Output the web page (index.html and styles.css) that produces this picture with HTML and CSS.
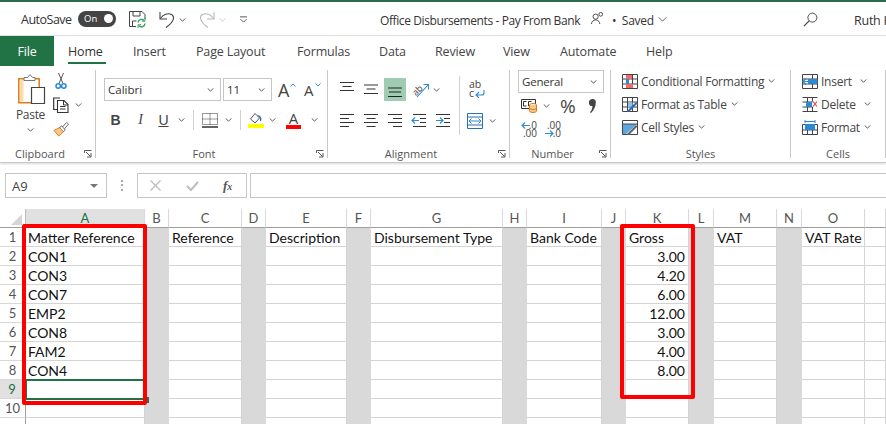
FILE: index.html
```html
<!DOCTYPE html>
<html lang="en">
<head>
<meta charset="utf-8">
<title>Office Disbursements - Pay From Bank</title>
<link rel="stylesheet" href="styles.css">
</head>
<body>
<div class="app">
  <header class="titlebar">
    <span class="autosave">AutoSave</span>
    <span class="toggle"><span class="toggle-text">On</span><span class="knob"></span></span>
    <svg class="qat qat-save" viewBox="0 0 17 17"><path d="M7 15.500H.5V.5h12.500l3 3v4.500" fill="none" stroke="#444"/><path d="M4 .5v4.500h7V.5M3.500 15v-5h4" fill="none" stroke="#444"/><path d="M9 11.500a3.500 3.500 0 0 1 6-2M16 12.500a3.500 3.500 0 0 1-6 2.200" fill="none" stroke="#2f9e5c" stroke-width="1.400"/><path d="M16 7v3.200h-3M9 17v-3.200h3" fill="none" stroke="#2f9e5c"/></svg>
    <svg class="qat qat-undo" viewBox="0 0 17 17"><path d="M1 1v7h7" fill="none" stroke="#444" stroke-width="1.100"/><path d="M1.500 7.500C4 3.500 9 1.500 12.500 3.500c3.500 2.200 2.800 7-5.500 13" fill="none" stroke="#444" stroke-width="1.100"/></svg>
    <svg class="chev qat-c1" viewBox="0 0 8 5"><path d="M.5 .5L4 4 7.500 .5" fill="none" stroke="#444" stroke-width="1.100"/></svg>
    <svg class="qat qat-redo" viewBox="0 0 17 17"><path d="M16 1v7H9" fill="none" stroke="#b8b8b8" stroke-width="1.100"/><path d="M15.500 7.500C13 3.500 8 1.500 4.500 3.500c-3.500 2.200-2.800 7 5.500 13" fill="none" stroke="#b8b8b8" stroke-width="1.100"/></svg>
    <svg class="chev qat-c2" viewBox="0 0 8 5"><path d="M.5 .5L4 4 7.500 .5" fill="none" stroke="#c4c4c4" stroke-width="1.100"/></svg>
    <svg class="qat-more" viewBox="0 0 8 7"><path d="M0 .5h8M.5 3L4 6.500 7.500 3" fill="none" stroke="#444"/></svg>
    <span class="doc-title">Office Disbursements - Pay From Bank</span>
    <svg class="person" viewBox="0 0 14 14"><circle cx="5" cy="5" r="2.800" fill="none" stroke="#444"/><path d="M.5 13a4.500 4.500 0 0 1 9 0" fill="none" stroke="#444"/><circle cx="10.500" cy="2.500" r="2" fill="none" stroke="#444"/></svg>
    <span class="saved">•&nbsp; Saved</span>
    <svg class="chev saved-c" viewBox="0 0 10 6"><path d="M.5 .5L5 5 9.500 .5" fill="none" stroke="#444"/></svg>
    <svg class="search" viewBox="0 0 16 16"><circle cx="10" cy="6" r="4.800" fill="none" stroke="#444"/><path d="M6.500 9.500L1 15" stroke="#444" stroke-width="1.300"/></svg>
    <span class="user">Ruth H</span>
  </header>

  <nav class="tabs">
    <span class="tab tab-file">File</span>
    <span class="tab tab-active">Home</span>
    <span class="tab t-insert">Insert</span>
    <span class="tab t-page">Page Layout</span>
    <span class="tab t-formulas">Formulas</span>
    <span class="tab t-data">Data</span>
    <span class="tab t-review">Review</span>
    <span class="tab t-view">View</span>
    <span class="tab t-auto">Automate</span>
    <span class="tab t-help">Help</span>
  </nav>

  <section class="ribbon">
    <div class="group g-clip">
      <div class="g-body clip-body">
        <div class="paste">
          <svg class="paste-ic" viewBox="0 0 28 30"><path d="M.8 4.800h20.400v24H.8z" fill="#fff" stroke="#e07b16" stroke-width="1.500"/><path d="M2 6h3.500v21.500H2z" fill="#fbdca8"/><path d="M6 6.500V3.500h3.500L12 .7l2.500 2.800H17v3z" fill="#fff" stroke="#777"/><path d="M13.500 13.500h13v16h-13z" fill="#fff" stroke="#444" stroke-width="1.200"/></svg>
          <span class="paste-label">Paste</span>
          <svg class="chev" viewBox="0 0 8 5"><path d="M.5 .5L4 4 7.500 .5" fill="none" stroke="#444" stroke-width="1.100"/></svg>
        </div>
        <div class="clip-tools">
          <svg class="ic16" viewBox="0 0 16 16"><path d="M5.500 0l4.500 10.500M10.500 0L6 10.500" stroke="#555" fill="none"/><circle cx="5.200" cy="13" r="2.200" fill="none" stroke="#2a8ad4" stroke-width="1.500"/><circle cx="10.800" cy="13" r="2.200" fill="none" stroke="#2a8ad4" stroke-width="1.500"/></svg>
          <span class="row"><svg class="ic16" viewBox="0 0 16 16"><path d="M7 1H.7v11.500H4" fill="none" stroke="#333" stroke-width="1.200"/><path d="M4.500 3.500h6.500l4 4v8h-10.500z" fill="#fff" stroke="#333" stroke-width="1.100"/><path d="M7 9.500h5.500M7 12h5.500M10.500 3.500v4.500h4.500" fill="none" stroke="#333"/></svg><svg class="chev" viewBox="0 0 8 5"><path d="M.5 .5L4 4 7.500 .5" fill="none" stroke="#444" stroke-width="1.100"/></svg></span>
          <svg class="ic16" viewBox="0 0 17 16"><path d="M10 6l4.500-5 2 1.800L12 8" fill="none" stroke="#666"/><path d="M9 4.500l4 4.500-2 2-4-4z" fill="#fff" stroke="#666"/><path d="M7 6.500L1 9.500 6 15.500l5-4.500z" fill="#f7c78b" stroke="#e07b16"/></svg>
        </div>
      </div>
      <div class="g-label has-launcher">Clipboard<svg class="launcher" viewBox="0 0 8 8"><path d="M.5 3V.5H7.500M2 2l4.500 4.500M3 7h4V3" fill="none" stroke="#555"/></svg></div>
    </div>

    <div class="group g-font">
      <div class="g-body font-body">
        <div class="row font-row1">
          <span class="combo combo-font">Calibri<svg class="chev" viewBox="0 0 8 5"><path d="M.5 .5L4 4 7.500 .5" fill="none" stroke="#444" stroke-width="1.100"/></svg></span>
          <span class="combo combo-size">11<svg class="chev" viewBox="0 0 8 5"><path d="M.5 .5L4 4 7.500 .5" fill="none" stroke="#444" stroke-width="1.100"/></svg></span>
          <span class="grow">A<svg class="caret" viewBox="0 0 6 4"><path d="M.5 3.500L3 1l2.500 2.500" fill="none" stroke="#2a8ad4"/></svg></span>
          <span class="grow shrink">A<svg class="caret" viewBox="0 0 6 4"><path d="M.5 .5L3 3l2.500-2.500" fill="none" stroke="#2a8ad4"/></svg></span>
        </div>
        <div class="row font-row2">
          <span class="fmt fmt-b">B</span>
          <span class="fmt fmt-i">I</span>
          <span class="fmt fmt-u">U</span>
          <svg class="chev" viewBox="0 0 8 5"><path d="M.5 .5L4 4 7.500 .5" fill="none" stroke="#444" stroke-width="1.100"/></svg>
          <span class="vsep"></span>
          <svg class="ic16 ic-border" viewBox="0 0 16 15"><path d="M.5 .5h15v11H.5zM8 .5v11M.5 6h15" fill="none" stroke="#333" stroke-dasharray="1 1"/><path d="M0 14h16" stroke="#111" stroke-width="1.300"/></svg>
          <svg class="chev" viewBox="0 0 8 5"><path d="M.5 .5L4 4 7.500 .5" fill="none" stroke="#444" stroke-width="1.100"/></svg>
          <span class="vsep"></span>
          <svg class="ic16 ic-fill" viewBox="0 0 16 16"><path d="M2.500 7L7 1.500l4.500 4.500-4.500 5z" fill="#fff" stroke="#555"/><path d="M12.500 9c.8-2.500-.2-4.500-2.500-5.500" fill="none" stroke="#2a6fb5" stroke-width="1.300"/><path d="M0 12h16v4H0z" fill="#ffff00"/></svg>
          <svg class="chev" viewBox="0 0 8 5"><path d="M.5 .5L4 4 7.500 .5" fill="none" stroke="#444" stroke-width="1.100"/></svg>
          <span class="font-color">A</span>
          <svg class="chev" viewBox="0 0 8 5"><path d="M.5 .5L4 4 7.500 .5" fill="none" stroke="#444" stroke-width="1.100"/></svg>
        </div>
      </div>
      <div class="g-label has-launcher">Font<svg class="launcher" viewBox="0 0 8 8"><path d="M.5 3V.5H7.500M2 2l4.500 4.500M3 7h4V3" fill="none" stroke="#555"/></svg></div>
    </div>

    <div class="group g-align">
      <div class="g-body align-body">
        <div class="align-main">
          <div class="row align-row">
            <svg class="al" viewBox="0 0 16 16"><path d="M1 .5h14M3.500 4.500h9M1 8.500h14" stroke="#333"/></svg>
            <svg class="al" viewBox="0 0 16 16"><path d="M1 3h14M3.500 7h9M1 11.500h14" stroke="#333"/></svg>
            <span class="al-on"><svg class="al" viewBox="0 0 16 16"><path d="M1 6h14M2 10h12M1 14.500h14" stroke="#222"/></svg></span>
            <svg class="al-orient" viewBox="0 0 18 16"><text x="0" y="11" class="orient-text" transform="rotate(-45 6 8)">ab</text><path d="M5 15L16 3M11.500 2.500h5v5" fill="none" stroke="#2a8ad4" stroke-width="1.100"/></svg>
            <svg class="chev" viewBox="0 0 8 5"><path d="M.5 .5L4 4 7.500 .5" fill="none" stroke="#444" stroke-width="1.100"/></svg>
          </div>
          <div class="row align-row2">
            <svg class="al" viewBox="0 0 16 16"><path d="M1 1.500h14M1 5.500h9M1 9.500h14M1 13.500h9" stroke="#333"/></svg>
            <svg class="al" viewBox="0 0 16 16"><path d="M1 1.500h14M3.500 5.500h9M1 9.500h14M3.500 13.500h9" stroke="#333"/></svg>
            <svg class="al" viewBox="0 0 16 16"><path d="M1 1.500h14M6 5.500h9M1 9.500h14M6 13.500h9" stroke="#333"/></svg>
            <svg class="al" viewBox="0 0 16 16"><path d="M2 1.500h13M9 5.500h6M9 9.500h6M2 13.500h13" stroke="#333"/><path d="M8 7.500H1M4 4.500l-3 3 3 3" fill="none" stroke="#2a8ad4" stroke-width="1.100"/></svg>
            <svg class="al" viewBox="0 0 16 16"><path d="M1 1.500h14M9 5.500h6M9 9.500h6M1 13.500h14" stroke="#333"/><path d="M1 7.500h7M5 4.500l3 3-3 3" fill="none" stroke="#2a8ad4" stroke-width="1.100"/></svg>
          </div>
        </div>
        <span class="vsep tall"></span>
        <div class="align-side">
          <span class="wrap"><span class="wrap-ab">ab</span><span class="wrap-c">c<svg class="wrap-arrow" viewBox="0 0 10 8"><path d="M9 0v3a2 2 0 0 1-2 2H1M4 2L1 5l3 3" fill="none" stroke="#2a8ad4" stroke-width="1.100"/></svg></span></span>
          <span class="row merge"><svg class="ic16" viewBox="0 0 16 16"><path d="M.5 .5h15v15H.5zM.5 4h15M.5 12h15" fill="none" stroke="#2a6fb5"/><path d="M2 8h12M4.500 5.500L2 8l2.500 2.500M11.500 5.500L14 8l-2.500 2.500" fill="none" stroke="#2a8ad4"/></svg><svg class="chev" viewBox="0 0 8 5"><path d="M.5 .5L4 4 7.500 .5" fill="none" stroke="#444" stroke-width="1.100"/></svg></span>
        </div>
      </div>
      <div class="g-label has-launcher">Alignment<svg class="launcher" viewBox="0 0 8 8"><path d="M.5 3V.5H7.500M2 2l4.500 4.500M3 7h4V3" fill="none" stroke="#555"/></svg></div>
    </div>

    <div class="group g-num">
      <div class="g-body num-body">
        <span class="combo combo-num">General<svg class="chev" viewBox="0 0 8 5"><path d="M.5 .5L4 4 7.500 .5" fill="none" stroke="#444" stroke-width="1.100"/></svg></span>
        <div class="row num-row">
          <svg class="ic16 cur" viewBox="0 0 16 14"><path d="M.5 .5h14v9H.5z" fill="none" stroke="#333"/><path d="M2.500 2.500h3M2.500 7h3M2.500 2.500V7M7.500 2.500h3M7.500 7h1M7.500 2.500V7" fill="none" stroke="#333"/><ellipse cx="12" cy="6" rx="3.500" ry="1.500" fill="#fff" stroke="#e07b16"/><path d="M8.500 6v6c0 2 7 2 7 0V6" fill="#f7c78b" stroke="#e07b16"/><path d="M8.500 9c0 2 7 2 7 0" fill="none" stroke="#e07b16"/></svg>
          <svg class="chev" viewBox="0 0 8 5"><path d="M.5 .5L4 4 7.500 .5" fill="none" stroke="#444" stroke-width="1.100"/></svg>
          <span class="pct">%</span>
          <svg class="comma" viewBox="0 0 7 14"><path d="M3.500 0a3.200 3.200 0 0 1 3.300 3.800C6.800 8 4.500 11.500 2 14l-1-.7c1.400-1.700 2.300-3.500 2.500-6.100a3.600 3.600 0 0 1 0-7.200z" fill="#444"/></svg>
        </div>
        <div class="row dec-row">
          <span class="dec"><svg class="dec-a" viewBox="0 0 9 7"><path d="M9 3.500H1M4 .5l-3 3 3 3" fill="none" stroke="#2a8ad4" stroke-width="1.100"/></svg><span class="d1">.0</span><span class="d2">.00</span></span>
          <span class="dec"><span class="d1">.00</span><svg class="dec-a dec-b" viewBox="0 0 9 7"><path d="M0 3.500h8M5 .5l3 3-3 3" fill="none" stroke="#2a8ad4" stroke-width="1.100"/></svg><span class="d2">.0</span></span>
        </div>
      </div>
      <div class="g-label has-launcher">Number<svg class="launcher" viewBox="0 0 8 8"><path d="M.5 3V.5H7.500M2 2l4.500 4.500M3 7h4V3" fill="none" stroke="#555"/></svg></div>
    </div>

    <div class="group g-styles">
      <div class="g-body list-body">
        <div class="li"><svg class="ic16" viewBox="0 0 16 15"><path d="M.5 .5h15v14H.5zM.5 5h15M.5 10h15M5.500 .5v14M10.500 .5v14" fill="none" stroke="#444"/><path d="M4 1h6v4H4zM4 10h7v4H4z" fill="#f46a6a"/><path d="M4 5h3v5H4z" fill="#2a8ad4"/></svg><span>Conditional Formatting</span><svg class="chev" viewBox="0 0 8 5"><path d="M.5 .5L4 4 7.500 .5" fill="none" stroke="#444" stroke-width="1.100"/></svg></div>
        <div class="li"><svg class="ic16" viewBox="0 0 16 15"><path d="M.5 .5h15v14H.5zM.5 5h15M.5 10h15M5.500 .5v14M10.500 .5v14" fill="none" stroke="#444"/><path d="M6 5.500h4.500v4H6z" fill="#8cc3ee"/><path d="M5 14l9-9 1.500 1.500-9 9z" fill="#2a6fb5"/></svg><span>Format as Table</span><svg class="chev" viewBox="0 0 8 5"><path d="M.5 .5L4 4 7.500 .5" fill="none" stroke="#444" stroke-width="1.100"/></svg></div>
        <div class="li"><svg class="ic16" viewBox="0 0 16 15"><path d="M.5 .5h15v14H.5z" fill="none" stroke="#444"/><path d="M1 4h14L4 14H1z" fill="#5ba7e0"/><path d="M.5 4h15" stroke="#444"/><path d="M5 14l9-9 1.500 1.500-9 9z" fill="#666"/></svg><span>Cell Styles</span><svg class="chev" viewBox="0 0 8 5"><path d="M.5 .5L4 4 7.500 .5" fill="none" stroke="#444" stroke-width="1.100"/></svg></div>
      </div>
      <div class="g-label">Styles</div>
    </div>

    <div class="group g-cells">
      <div class="g-body list-body">
        <div class="li"><svg class="ic16" viewBox="0 0 16 15"><path d="M.5 .5h15v14H.5zM.5 5h15M.5 10h15M10.500 .5v14" fill="none" stroke="#444"/><path d="M6 5h9.500v5H6z" fill="#2a8ad4"/><path d="M8 7.500H1M4 4.500l-3 3 3 3" fill="none" stroke="#2a8ad4" stroke-width="1.200"/></svg><span class="w-ins">Insert</span><svg class="chev" viewBox="0 0 8 5"><path d="M.5 .5L4 4 7.500 .5" fill="none" stroke="#444" stroke-width="1.100"/></svg></div>
        <div class="li"><svg class="ic16" viewBox="0 0 16 15"><path d="M.5 .5h15M.5 14.500h15M.5 5h10M.5 10h10M5.500 .5v14M10.500 .5v4M10.500 10v4" fill="none" stroke="#444"/><path d="M4 5h6v5H4z" fill="#2a8ad4"/><path d="M11 4.500l4 5M15 4.500l-4 5" stroke="#e8434f" stroke-width="1.200"/></svg><span class="w-del">Delete</span><svg class="chev" viewBox="0 0 8 5"><path d="M.5 .5L4 4 7.500 .5" fill="none" stroke="#444" stroke-width="1.100"/></svg></div>
        <div class="li"><svg class="ic16" viewBox="0 0 16 15"><path d="M.5 4.500h15v10H.5zM.5 10h15M5.500 4.500v10M10.500 4.500v10" fill="none" stroke="#444"/><path d="M3 4h10v6H3z" fill="#2a8ad4"/><path d="M3 1.500h10M3 0v3M13 0v3" stroke="#2a8ad4"/></svg><span>Format</span><svg class="chev" viewBox="0 0 8 5"><path d="M.5 .5L4 4 7.500 .5" fill="none" stroke="#444" stroke-width="1.100"/></svg></div>
      </div>
      <div class="g-label">Cells</div>
    </div>
  </section>

  <section class="formula-bar">
    <span class="namebox">A9<span class="caret-down"></span></span>
    <span class="dots"></span>
    <span class="fx-box">
      <svg class="fx-x" viewBox="0 0 11 11"><path d="M.5 .5l10 10M10.500 .5l-10 10" stroke="#bdbdbd" stroke-width="1.300"/></svg>
      <svg class="fx-c" viewBox="0 0 13 10"><path d="M1 5l4 4 7-8" fill="none" stroke="#bdbdbd" stroke-width="2"/></svg>
      <span class="fx"><i>f</i><i class="x">x</i></span>
    </span>
    <span class="fx-input"></span>
  </section>

  <section class="sheet" id="sheet"></section>
</div>
<script src="sheet.js"></script>
</body>
</html>
```

FILE: sheet.js
```js
const cols = ["A","B","C","D","E","F","G","H","I","J","K","L","M","N","O","P"];
const grey = new Set(["B","D","F","H","J","L","N"]);
const data = {
  1:{A:"Matter Reference",C:"Reference",E:"Description",G:"Disbursement Type",I:"Bank Code",K:"Gross",M:"VAT",O:"VAT Rate"},
  2:{A:"CON1",K:"3.00"},3:{A:"CON3",K:"4.20"},4:{A:"CON7",K:"6.00"},5:{A:"EMP2",K:"12.00"},
  6:{A:"CON8",K:"3.00"},7:{A:"FAM2",K:"4.00"},8:{A:"CON4",K:"8.00"}
};
const sheet = document.getElementById("sheet");
let html = '<div class="corner"><span class="corner-tri"></span></div>';
for (const c of cols) html += `<div class="ch${c === "A" ? " ch-sel" : ""}">${c === "P" ? "" : c}</div>`;
for (let r = 1; r <= 11; r++) {
  html += `<div class="rh${r === 9 ? " rh-sel" : ""}">${r <= 10 ? r : ""}</div>`;
  for (const c of cols) {
    const v = (data[r] && data[r][c]) || "";
    const cls = ["cell"];
    if (c === "A") cls.push("col-a");
    if (grey.has(c)) cls.push("grey");
    if (r > 1 && c === "K") cls.push("num");
    if (r === 9 && c === "A") cls.push("active");
    html += `<div class="${cls.join(" ")}">${v}</div>`;
  }
}
html += '<div class="redbox red-a"></div><div class="redbox red-k"></div>';
sheet.innerHTML = html;
```

FILE: styles.css
```css
* { box-sizing: border-box; }
html, body { margin: 0; height: 100%; overflow: hidden; background: #fff; }
body { font-family: "Open Sans", "Liberation Sans", sans-serif; color: #333; }
svg { display: block; flex: none; }
.app { width: 886px; height: 424px; overflow: hidden; display: flex; flex-direction: column; }
.row { display: flex; align-items: center; }

.titlebar { height: 36px; flex: none; border-top: 2px solid #2d6b4b; border-bottom: 1px solid #e1e1e1; display: flex; align-items: center; font-size: 12.500px; letter-spacing: -.25px; color: #333; padding-left: 21px; }
.titlebar > * { flex: none; }
.autosave { width: 57px; margin-top: 1px; letter-spacing: -.5px; }
.toggle { width: 38px; height: 16px; border-radius: 8px; background: #444; display: flex; align-items: center; justify-content: space-between; padding: 0 3px 0 6px; color: #fff; font-size: 9.500px; letter-spacing: 0; margin-right: 13px; }
.knob { width: 9px; height: 9px; border-radius: 50%; background: #fff; }
.qat { width: 17px; height: 17px; margin-top: 2px; }
.qat-undo { margin-left: 13px; }
.chev { width: 7px; height: 4px; }
.qat-c1 { margin-left: 3px; margin-top: 2px; }
.qat-redo { margin-left: 12px; }
.qat-c2 { margin-left: 4px; margin-top: 2px; }
.qat-more { width: 7px; height: 7px; margin-left: 14px; margin-top: 2px; }
.doc-title { margin-left: 133px; width: 203px; white-space: nowrap; font-size: 12px; letter-spacing: -.4px; margin-top: 4px; }
.person { width: 13px; height: 13px; margin-left: 8px; margin-top: -1px; }
.saved { margin-left: 8px; width: 40px; font-size: 12px; letter-spacing: -.3px; white-space: nowrap; margin-top: 4px; }
.saved-c { width: 9px; height: 5px; margin-left: 6px; margin-top: 1px; }
.search { width: 15px; height: 15px; margin-left: 136px; margin-top: 1px; }
.user { margin-left: 36px; white-space: nowrap; margin-top: 3px; }

.tabs { height: 30px; flex: none; display: flex; align-items: center; font-size: 12.500px; letter-spacing: -.15px; color: #444; }
.tab { white-space: nowrap; position: relative; flex: none; }
.tab-file { background: #217346; color: #fff; width: 54px; height: 30px; display: flex; align-items: center; justify-content: center; }
.tab-active { margin-left: 14px; width: 38px; color: #333; font-weight: 500; }
.tab-active::after { content: ""; position: absolute; left: 0; right: 0; bottom: -4px; height: 2px; background: #217346; }
.t-insert { margin-left: 27px; width: 32px; }
.t-page { margin-left: 31px; width: 71px; }
.t-formulas { margin-left: 30px; width: 53px; }
.t-data { margin-left: 29px; width: 27px; }
.t-review { margin-left: 29px; width: 40px; }
.t-view { margin-left: 28px; width: 27px; }
.t-auto { margin-left: 30px; width: 56px; }
.t-help { margin-left: 30px; width: 27px; }

.ribbon { height: 97px; flex: none; display: flex; border-bottom: 1px solid #c8c8c8; box-shadow: 0 1px 2px #d8d8d8; padding-top: 4px; font-size: 12px; color: #444; }
.group { display: flex; flex-direction: column; height: 88px; border-right: 1px solid #c8c8c8; flex: none; }
.g-body { flex: none; height: 76px; }
.g-label { flex: none; height: 16px; position: relative; text-align: center; font-size: 11px; line-height: 16px; color: #555; }
.has-launcher { padding-right: 15px; }
.launcher { position: absolute; right: 3px; bottom: 4px; width: 8px; height: 8px; }
.g-clip { width: 96px; }
.g-font { width: 232px; }
.g-align { width: 182px; }
.g-num { width: 101px; }
.g-styles { width: 180px; }
.g-cells { width: 95px; }
.ic16 { width: 16px; height: 15px; }

.clip-body { display: flex; padding: 3px 0 0 17px; }
.paste { width: 30px; display: flex; flex-direction: column; align-items: center; }
.paste-ic { width: 28px; height: 30px; margin-top: 1px; }
.paste-label { margin-top: 3px; line-height: 15px; margin-left: -3px; letter-spacing: -.3px; }
.paste .chev { margin-top: 6px; margin-left: -3px; }
.clip-tools { display: flex; flex-direction: column; gap: 8px; margin-left: 6px; }
.clip-tools .ic16 { height: 16px; }
.clip-tools .chev { margin-left: 6px; }

.font-body { padding: 8px 0 0 8px; }
.font-row1 { gap: 2px; }
.combo { height: 23px; flex: none; border: 1px solid #c6c6c6; display: flex; align-items: center; justify-content: space-between; padding: 0 6px 0 3px; font-size: 11.500px; color: #333; }
.combo-font { width: 117px; }
.combo-size { width: 49px; }
.grow { font-size: 18px; line-height: 20px; margin-left: 4px; color: #444; width: 20px; display: flex; align-items: flex-start; }
.shrink { font-size: 15px; margin-left: 4px; }
.caret { width: 6px; height: 4px; margin-top: 3px; margin-left: 1px; }
.font-row2 { margin-top: 9px; padding-left: 3px; }
.fmt { font-family: "Liberation Serif", serif; font-size: 14px; width: 17px; margin-right: 8px; text-align: center; color: #444; }
.fmt-b { font-family: "Liberation Sans", sans-serif; font-weight: 700; }
.fmt-i { font-style: italic; margin-right: 6px; }
.fmt-u { text-decoration: underline; font-family: "Liberation Sans", sans-serif; margin-right: 6px; }
.vsep { width: 1px; height: 20px; flex: none; background: #d0d0d0; margin: 0 8px; }
.ic-border { margin-right: 7px; }
.ic-fill { height: 16px; margin-right: 5px; margin-left: -1px; }
.font-color { font-size: 15px; line-height: 13px; margin: 0 10px 0 10px; width: 15px; height: 17px; text-align: center; border-bottom: 4px solid #f00; color: #444; }

.align-body { display: flex; padding: 8px 0 0 11px; }
.align-main { width: 120px; flex: none; }
.al { width: 16px; height: 16px; }
.align-row { gap: 8px; height: 23px; }
.al-on { width: 22px; height: 23px; flex: none; background: #a0cdb1; display: flex; align-items: center; justify-content: center; margin: 0 -3px; }
.al-orient { width: 18px; height: 16px; margin-left: 1px; }
.align-row .chev { margin-left: -5px; }
.orient-text { font-size: 9px; fill: #444; font-family: "Open Sans", sans-serif; }
.align-row2 { gap: 8px; margin-top: 12px; }
.tall { height: 59px; margin: -2px 0 0 0; }
.align-side { display: flex; flex-direction: column; padding-left: 7px; }
.wrap { display: flex; flex-direction: column; font-size: 10.500px; line-height: 9px; color: #444; height: 26px; padding: 2px 0 0 2px; width: 22px; }
.wrap-c { display: flex; align-items: center; }
.wrap-arrow { width: 10px; height: 8px; margin-left: 1px; }
.merge { margin-top: 9px; gap: 6px; }
.merge .ic16 { height: 16px; }

.num-body { padding: 0 0 0 8px; display: flex; flex-direction: column; }
.combo-num { width: 86px; letter-spacing: -.2px; font-size: 11.500px; }
.num-row { margin-top: 3px; height: 20px; padding-left: 3px; }
.num-row .chev { margin-left: 6px; }
.cur { height: 14px; }
.pct { font-size: 19px; line-height: 20px; margin-left: 10px; width: 16px; color: #444; }
.comma { width: 7px; height: 14px; margin-left: 13px; }
.dec-row { margin-top: 5px; gap: 7px; padding-left: 3px; }
.dec { position: relative; width: 17px; height: 16px; font-size: 10px; line-height: 8px; display: block; color: #444; }
.dec-a { position: absolute; left: 0; top: 1px; width: 9px; height: 7px; }
.dec-b { top: 9px; }
.d1 { position: absolute; right: 1px; top: 0; }
.d2 { position: absolute; right: 1px; top: 8px; }

.list-body { display: flex; flex-direction: column; gap: 7px; padding: 3px 0 0 11px; }
.li { display: flex; align-items: center; height: 16px; font-size: 12px; letter-spacing: -.25px; white-space: nowrap; color: #444; }
.li span { margin-left: 3px; }
.li .chev { margin-left: 4px; }
.w-ins { width: 35px; }
.w-del { width: 39px; }

.formula-bar { height: 46px; padding: 10px 0 0 5px; display: flex; align-items: flex-start; flex: none; }
.namebox { width: 102px; height: 25px; flex: none; border: 1px solid #c6c6c6; display: flex; align-items: center; justify-content: space-between; padding: 0 8px 0 6px; font-size: 13px; color: #444; }
.caret-down { width: 0; height: 0; border: 4px solid transparent; border-top: 4px solid #777; border-bottom: 0; }
.dots { width: 2px; height: 11px; flex: none; margin: 7px 14px 0 14px; background: repeating-linear-gradient(#aaa 0 2px, transparent 2px 4.500px); }
.fx-box { width: 110px; height: 25px; flex: none; border: 1px solid #c6c6c6; display: flex; align-items: center; padding-left: 12px; }
.fx-x { width: 11px; height: 11px; }
.fx-c { width: 13px; height: 10px; margin-left: 25px; }
.fx { font-family: "Liberation Serif", serif; font-size: 13px; font-weight: 700; margin-left: 24px; color: #555; white-space: nowrap; }
.x { font-size: 10px; }
.fx-input { flex: 1; height: 25px; border: 1px solid #c6c6c6; border-right: 0; margin-left: 3px; }

.sheet { display: grid; grid-template-columns: 26px 119px 24px 73px 24px 81px 24px 132px 24px 75px 24px 63px 25px 63px 25px 63px 21px; grid-auto-rows: 19px; position: relative; flex: 1; min-height: 0; overflow: hidden; font-family: Lato, "Open Sans", sans-serif; font-size: 14px; color: #111; }
.corner { background: #fff; border-right: 1px solid #bdbdbd; border-bottom: 1px solid #9f9f9f; position: relative; }
.corner-tri { position: absolute; right: 3px; bottom: 2px; width: 0; height: 0; border-left: 11px solid transparent; border-bottom: 11px solid #d6d6d6; }
.ch { background: #fff; border-right: 1px solid #d8d8d8; border-bottom: 1px solid #9f9f9f; text-align: center; font-size: 13px; line-height: 18px; color: #555; }
.ch-sel { background: #e1e1e1; color: #217346; border-bottom: 2px solid #217346; }
.rh { background: #fff; border-right: 1px solid #9f9f9f; border-bottom: 1px solid #d8d8d8; text-align: center; font-size: 13px; line-height: 19px; color: #555; }
.rh-sel { background: #e1e1e1; color: #217346; border-right: 2px solid #217346; }
.cell { border-right: 1px solid #d4d4d4; border-bottom: 1px solid #d4d4d4; padding: 1px 3px 0; line-height: 18px; white-space: nowrap; background: #fff; }
.col-a { padding-left: 2px; }
.grey { background: #d9d9d9; border-color: #d9d9d9; }
.num { text-align: right; }
.active { position: relative; z-index: 1; border: 0; box-shadow: 0 0 0 1px #217346, inset 0 0 0 1px #217346; }
.active::after { content: ""; position: absolute; right: -4px; bottom: -4px; width: 6px; height: 6px; background: #217346; }
.redbox { position: absolute; z-index: 2; border: 4px solid #f00; border-radius: 2px; }
.red-a { left: 22px; top: 15px; width: 125px; height: 181px; }
.red-k { left: 620px; top: 15px; width: 75px; height: 175px; }
```
